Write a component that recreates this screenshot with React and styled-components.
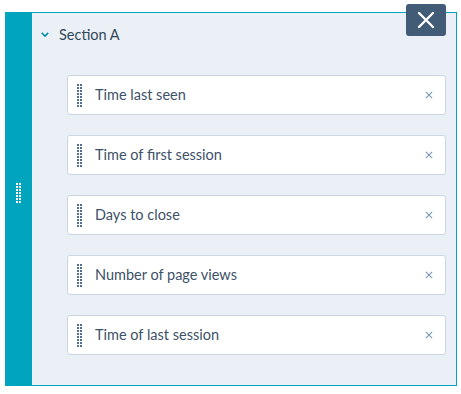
import React from "react";
import styled, { createGlobalStyle } from "styled-components";

const fields = [
  "Time last seen",
  "Time of first session",
  "Days to close",
  "Number of page views",
  "Time of last session",
];

const App = () => {
  return (
    <>
      <GlobalStyle />
      <Page>
        <Frame>
          <SideBar>
            <Grip $color="#ffffff" $rows={7} />
          </SideBar>
          <Body>
            <Header>
              <Chevron viewBox="0 0 10 6">
                <path d="M1 1l4 4 4-4" />
              </Chevron>
              <Title>Section A</Title>
            </Header>
            <List>
              {fields.map((f) => (
                <Card key={f}>
                  <Grip $color="#516f90" $rows={8} />
                  <Label>{f}</Label>
                  <Remove viewBox="0 0 10 10">
                    <path d="M1 1l8 8M9 1l-8 8" />
                  </Remove>
                </Card>
              ))}
            </List>
          </Body>
          <CloseButton>
            <svg width="18" height="18" viewBox="0 0 18 18">
              <path
                d="M2 2l14 14M16 2L2 16"
                stroke="#fff"
                strokeWidth="2.4"
                strokeLinecap="round"
              />
            </svg>
          </CloseButton>
        </Frame>
      </Page>
    </>
  );
};

export default App;

const GlobalStyle = createGlobalStyle`
  body {
    margin: 0;
    background: #ffffff;
    font-family: Lato, "Open Sans", sans-serif;
  }
`;
const Page = styled.div`
  padding: 12px 4px 0 5px;
`;
const Frame = styled.div`
  position: relative;
  display: flex;
  width: 452px;
  height: 374px;
  box-sizing: border-box;
  border: 1px solid #00a4bd;
  border-left: none;
  background: #eaf0f6;
`;
const SideBar = styled.div`
  width: 27px;
  background: #00a4bd;
  display: flex;
  align-items: center;
  justify-content: center;
  flex-shrink: 0;
  padding-bottom: 12px;
  box-sizing: border-box;
  margin: -1px 0;
`;
// two columns of 2px dots, 3px apart
const Grip = styled.div`
  width: 5px;
  height: ${(p) => p.$rows * 3 - 1}px;
  flex-shrink: 0;
  background: linear-gradient(
    90deg,
    ${(p) => p.$color} 0 2px,
    transparent 2px 3px,
    ${(p) => p.$color} 3px 5px
  );
  -webkit-mask: repeating-linear-gradient(#000 0 2px, transparent 2px 3px);
  mask: repeating-linear-gradient(#000 0 2px, transparent 2px 3px);
`;
const Body = styled.div`
  flex: 1;
  display: flex;
  flex-direction: column;
`;
const Header = styled.div`
  display: flex;
  align-items: center;
  height: 44px;
  padding-left: 9px;
  padding-bottom: 2px;
  box-sizing: border-box;
`;
const Chevron = styled.svg`
  width: 8px;
  height: 5px;
  fill: none;
  stroke: #0091ae;
  stroke-width: 2;
  margin-right: 10px;
  margin-top: 1px;
`;
const Title = styled.span`
  font-size: 14.5px;
  color: #33475b;
`;
const List = styled.div`
  display: flex;
  flex-direction: column;
  gap: 20px;
  padding: 18px 10px 0 35px;
`;
const Card = styled.div`
  display: flex;
  align-items: center;
  height: 40px;
  box-sizing: border-box;
  background: #ffffff;
  border: 1px solid #cbd6e2;
  border-radius: 3px;
  padding: 0 12px 0 9px;
`;
const Label = styled.span`
  flex: 1;
  margin-left: 13px;
  margin-bottom: 1px;
  font-size: 14.5px;
  color: #3d5168;
`;
const Remove = styled.svg`
  width: 8px;
  height: 8px;
  fill: none;
  stroke: #7c98b6;
  stroke-width: 1.4;
`;
const CloseButton = styled.div`
  position: absolute;
  top: -9px;
  right: 10px;
  width: 40px;
  height: 32px;
  border-radius: 3px;
  background: #425b76;
  display: flex;
  align-items: center;
  justify-content: center;
`;
